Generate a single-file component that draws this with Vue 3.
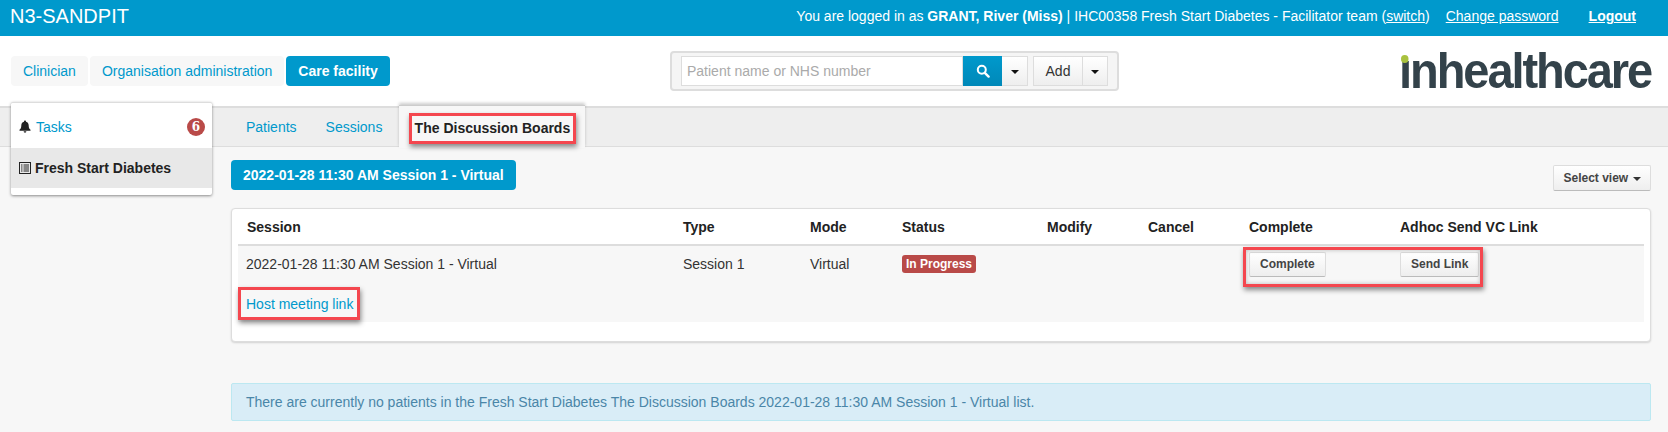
<script setup>
const columns = [
  { label: 'Session', width: 437 },
  { label: 'Type', width: 127 },
  { label: 'Mode', width: 92 },
  { label: 'Status', width: 145 },
  { label: 'Modify', width: 101 },
  { label: 'Cancel', width: 101 },
  { label: 'Complete', width: 151 },
  { label: 'Adhoc Send VC Link', width: 252 }
]
</script>

<template>
  <div class="page">
    <header class="topbar">
      <div class="brand">N3-SANDPIT</div>
      <div class="user">
        <span>You are logged in as <b>GRANT, River (Miss)</b> | IHC00358 Fresh Start Diabetes - Facilitator team (<a>switch</a>)</span>
        <a class="change">Change password</a>
        <a class="logout">Logout</a>
      </div>
    </header>

    <section class="masthead">
      <nav class="pills">
        <a class="pill">Clinician</a>
        <a class="pill">Organisation administration</a>
        <a class="pill active">Care facility</a>
      </nav>
      <div class="search-well">
        <div class="search-input">Patient name or NHS number</div>
        <button class="btn-search" aria-label="Search">
          <svg width="14" height="14" viewBox="0 0 14 14"><circle cx="5.8" cy="5.8" r="4" fill="none" stroke="#fff" stroke-width="2"/><path d="M8.8 8.8 12.6 12.6" stroke="#fff" stroke-width="2.4" stroke-linecap="round"/></svg>
        </button>
        <button class="btn-caret"><i class="caret"></i></button>
        <button class="btn-add">Add</button>
        <button class="btn-caret add-caret"><i class="caret"></i></button>
      </div>
      <div class="logo"><i class="logo-dot"></i>ınhealthcare</div>
    </section>

    <main class="main">
      <aside class="side">
        <div class="side-row tasks">
          <svg class="side-icon" width="12" height="13" viewBox="0 0 12 13"><path d="M6 0.5c.6 0 1 .4 1 1v.3c1.8.4 2.7 1.9 2.7 3.7 0 2.300.6 3.300 1.800 4.300v.9H.5v-.9c1.200-1 1.800-2 1.800-4.300C2.300 3.700 3.200 2.200 5 1.800v-.3c0-.6.400-1 1-1z" fill="#222"/><path d="M4.600 11.300h2.800a1.400 1.400 0 0 1-2.800 0z" fill="#222"/></svg>
          <a>Tasks</a>
          <span class="badge">6</span>
        </div>
        <div class="side-row current">
          <svg class="side-icon" width="12" height="12" viewBox="0 0 12 12"><rect x="0.500" y="0.500" width="11" height="11" fill="none" stroke="#222"/><path d="M2 3h1.500M2 5h1.500M2 7h1.500M2 9h1.500M4.500 3H10M4.500 5H10M4.500 7H10M4.500 9H10" stroke="#222"/></svg>
          <b>Fresh Start Diabetes</b>
        </div>
      </aside>

      <div class="tabstrip">
        <a class="tab">Patients</a>
        <a class="tab">Sessions</a>
        <div class="tab-active"><span class="marked-tab">The Discussion Boards</span></div>
      </div>

      <div class="content">
        <div class="toolbar">
          <div class="session-label">2022-01-28 11:30 AM Session 1 - Virtual</div>
          <button class="btn-small select-view">Select view <i class="caret small"></i></button>
        </div>

        <div class="panel">
          <div class="table-wrap">
            <table>
              <colgroup>
                <col v-for="c in columns" :key="c.label" :style="{ width: c.width + 'px' }" />
              </colgroup>
              <thead>
                <tr><th v-for="c in columns" :key="c.label">{{ c.label }}</th></tr>
              </thead>
              <tbody>
                <tr class="row-main">
                  <td>2022-01-28 11:30 AM Session 1 - Virtual</td>
                  <td>Session 1</td>
                  <td>Virtual</td>
                  <td><span class="label">In Progress</span></td>
                  <td></td>
                  <td></td>
                  <td><button class="btn-small">Complete</button></td>
                  <td><button class="btn-small">Send Link</button></td>
                </tr>
                <tr class="row-link">
                  <td colspan="8"><a class="host-link">Host meeting link</a></td>
                </tr>
              </tbody>
            </table>
            <div class="mark-buttons"></div>
          </div>
        </div>

        <div class="alert">There are currently no patients in the Fresh Start Diabetes The Discussion Boards 2022-01-28 11:30 AM Session 1 - Virtual list.</div>
      </div>
    </main>
  </div>
</template>

<style>
html, body { margin: 0; background: #f7f7f7; }
</style>

<style scoped>
.page {
  width: 1668px;
  height: 432px;
  overflow: hidden;
  background: #f7f7f7;
  font-family: "Liberation Sans", Arial, sans-serif;
  font-size: 14px;
  color: #333;
}
a { color: #0099cc; }
button { font-family: inherit; cursor: pointer; }

.topbar {
  height: 36px;
  box-sizing: border-box;
  background: #0099cc;
  color: #fff;
  display: flex;
  align-items: center;
  justify-content: space-between;
  padding: 0 32px 4px 10px;
}
.brand { font-size: 20px; }
.user { display: flex; }
.user a { color: #fff; text-decoration: underline; }
.change { margin-left: 16px; }
.logout { margin-left: 30px; font-weight: bold; }

.masthead {
  height: 70px;
  background: #fff;
  display: grid;
  grid-template-columns: 659px 449px 1fr;
  padding-left: 11px;
  box-sizing: border-box;
}
.pills { display: flex; gap: 2px; padding-top: 20px; }
.pill {
  height: 30px;
  line-height: 30px;
  padding: 0 12px;
  background: #f7f7f7;
  border-radius: 4px;
}
.pill.active { background: #0099cc; color: #fff; font-weight: bold; }

.search-well {
  margin-top: 15px;
  height: 40px;
  box-sizing: border-box;
  display: flex;
  padding: 3px 9px;
  background: #f5f5f5;
  border: 2px solid #ddd;
  border-radius: 4px;
}
.search-input {
  width: 282px;
  height: 30px;
  box-sizing: border-box;
  line-height: 28px;
  padding-left: 5px;
  background: #fff;
  border: 1px solid #ddd;
  color: #aaa;
}
.btn-search {
  width: 39px;
  height: 30px;
  padding: 2px 0 0;
  border: 0;
  background: linear-gradient(#0099cc, #0088b8);
}
.btn-caret {
  width: 26px;
  height: 30px;
  padding: 0;
  background: linear-gradient(#fff, #eee);
  border: 1px solid #ddd;
  border-left: 0;
}
.btn-add {
  width: 50px;
  height: 30px;
  margin-left: 5px;
  padding: 0;
  font-size: 14px;
  color: #333;
  background: linear-gradient(#fff, #eee);
  border: 1px solid #ddd;
}
.add-caret { width: 25px; }
.caret {
  display: inline-block;
  border-top: 4px solid #111;
  border-left: 4px solid transparent;
  border-right: 4px solid transparent;
  vertical-align: middle;
}
.caret.small { border-top-color: #333; margin-left: 1px; }

.logo {
  position: relative;
  justify-self: end;
  margin: 7px 17px 0 0;
  height: 56px;
  line-height: 56px;
  font-size: 50px;
  font-weight: bold;
  letter-spacing: -2.2px;
  color: #33424a;
  transform: scaleX(0.94);
  transform-origin: right center;
}
.logo-dot {
  position: absolute;
  left: 2px;
  top: 12px;
  width: 8px;
  height: 8px;
  border-radius: 50%;
  background: #a9c23f;
}

.main { position: relative; }
.side {
  position: absolute;
  left: 11px;
  top: -4px;
  width: 201px;
  height: 93px;
  box-sizing: border-box;
  background: #fff;
  border-top: 1px solid #ddd;
  border-radius: 2px;
  box-shadow: 0 1px 3px rgba(0, 0, 0, 0.45);
  z-index: 2;
}
.side-row {
  display: flex;
  align-items: center;
  padding-left: 8px;
}
.side-icon { margin-right: 4px; flex: none; }
.tasks { height: 45px; position: relative; padding-top: 2px; box-sizing: border-box; }
.tasks .side-icon { margin-right: 5px; }
.current { height: 40px; background: #e8e8e8; color: #222; }
.badge {
  position: absolute;
  left: 176px;
  top: 15px;
  width: 18px;
  height: 18px;
  line-height: 18px;
  text-align: center;
  border-radius: 50%;
  background: #b94a48;
  color: #fff;
  font-size: 12px;
  font-weight: bold;
  font-family: "DejaVu Serif", serif;
}

.tabstrip {
  height: 41px;
  box-sizing: border-box;
  background: #eeeeee;
  border-top: 2px solid #ddd;
  border-bottom: 1px solid #ddd;
  padding-left: 246px;
  display: flex;
  align-items: center;
}
.tab { margin-right: 29px; }
.tab:nth-child(2) { margin-right: 17px; }
.tab-active {
  margin: -3px 0 -1px 0;
  height: 43px;
  width: 186px;
  box-sizing: border-box;
  background: #f7f7f7;
  border-top: 1px solid #ccc;
  box-shadow: 0 -2px 3px rgba(0, 0, 0, 0.2);
  display: flex;
  justify-content: center;
  padding-top: 7px;
}
.marked-tab {
  height: 31px;
  width: 167px;
  box-sizing: border-box;
  line-height: 25px;
  text-align: center;
  font-weight: bold;
  color: #222;
  white-space: nowrap;
  border: 3px solid #f4474f;
  box-shadow: 1px 3px 5px rgba(0, 0, 0, 0.45);
}

.content { padding: 13px 17px 0 231px; }
.toolbar {
  display: flex;
  justify-content: space-between;
  height: 48px;
}
.session-label {
  height: 30px;
  line-height: 30px;
  padding: 0 12px;
  background: #0099cc;
  color: #fff;
  font-weight: bold;
  border-radius: 4px;
}
.btn-small {
  height: 25px;
  padding: 0 10px;
  font-size: 12px;
  font-weight: bold;
  color: #444;
  background: linear-gradient(#fff, #eee);
  border: 1px solid #ddd;
  border-bottom-color: #bbb;
  border-radius: 2px;
}
.select-view { margin-top: 5px; height: 26px; width: 98px; padding: 0; }

.panel {
  height: 134px;
  box-sizing: border-box;
  background: #fff;
  border: 1px solid #ddd;
  border-radius: 4px;
  box-shadow: 0 1px 2px rgba(0, 0, 0, 0.15);
  padding: 0 6px;
}
.table-wrap { position: relative; }
table {
  width: 1406px;
  table-layout: fixed;
  border-collapse: collapse;
}
th {
  height: 36px;
  padding: 0 8px 0 8px;
  text-align: left;
  color: #222;
  border-bottom: 2px solid #ddd;
  font-size: 14px;
  box-sizing: border-box;
}
th:first-child { padding-left: 9px; }
td { padding: 0 8px; background: #f7f7f7; color: #333; }
.row-main td { height: 40px; padding-bottom: 3px; box-sizing: border-box; vertical-align: middle; }
.row-link td { height: 37px; padding: 0; box-sizing: border-box; vertical-align: top; }
.label {
  display: inline-block;
  height: 18px;
  line-height: 18px;
  padding: 0 4px;
  font-size: 12px;
  font-weight: bold;
  color: #fff;
  background: #b94a48;
  border-radius: 3px;
}
.host-link {
  display: block;
  width: 122px;
  height: 33px;
  line-height: 29px;
  margin-top: 2px;
  box-sizing: border-box;
  padding-left: 5px;
  border: 3px solid #f4474f;
  box-shadow: 1px 3px 5px rgba(0, 0, 0, 0.45);
  white-space: nowrap;
}
.mark-buttons {
  position: absolute;
  left: 1005px;
  top: 38px;
  width: 240px;
  height: 40px;
  box-sizing: border-box;
  border: 3px solid #f4474f;
  box-shadow: 1px 3px 5px rgba(0, 0, 0, 0.45), inset 0 0 4px rgba(0, 0, 0, 0.25);
  pointer-events: none;
}

.alert {
  margin-top: 41px;
  height: 38px;
  line-height: 36px;
  box-sizing: border-box;
  padding-left: 14px;
  background: #d9edf7;
  border: 1px solid #bce8f1;
  border-radius: 2px;
  color: #4a86a8;
}
</style>
